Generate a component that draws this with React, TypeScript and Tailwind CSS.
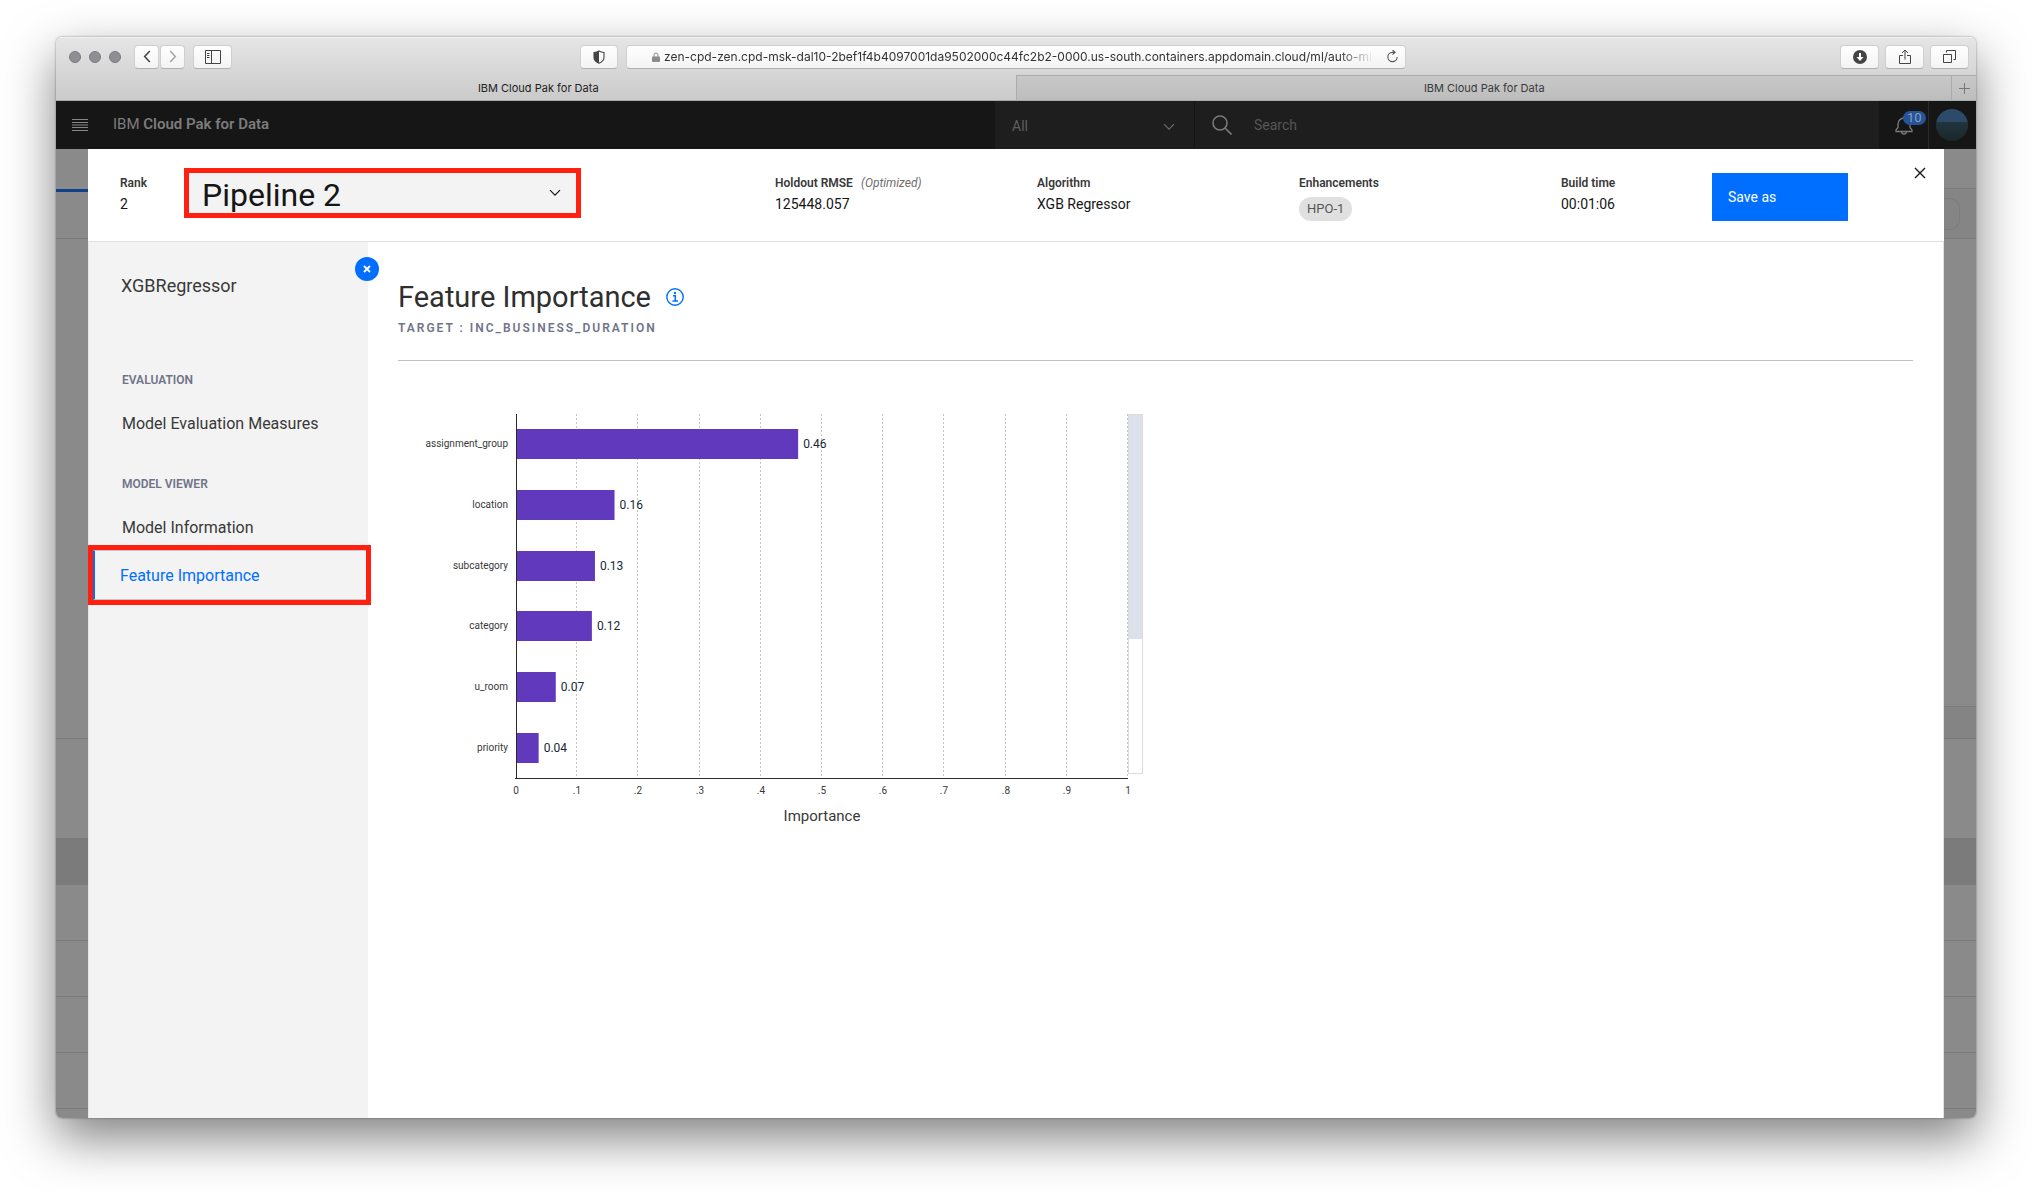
import type { ReactNode } from "react";

const features = [
  { name: "assignment_group", label: "0.46", value: 0.461 },
  { name: "location", label: "0.16", value: 0.161 },
  { name: "subcategory", label: "0.13", value: 0.129 },
  { name: "category", label: "0.12", value: 0.124 },
  { name: "u_room", label: "0.07", value: 0.065 },
  { name: "priority", label: "0.04", value: 0.037 },
];

const ticks = ["0", ".1", ".2", ".3", ".4", ".5", ".6", ".7", ".8", ".9", "1"];

function ChromeButton({ label, className = "", children }: { label: string; className?: string; children: ReactNode }) {
  return (
    <button
      type="button"
      aria-label={label}
      className={`flex h-6 items-center justify-center rounded-[4px] border border-[#cfcfcf] border-b-[#b0b0b0] bg-linear-to-b from-white to-[#f3f3f3] text-[#444] ${className}`}
    >
      {children}
    </button>
  );
}

function Chevron({ className = "" }: { className?: string }) {
  return (
    <svg viewBox="0 0 12 8" className={`h-2 w-3 ${className}`} fill="none" stroke="currentColor" strokeWidth="1.2" aria-hidden="true">
      <path d="M1 1.2 6 6.2 11 1.2" />
    </svg>
  );
}

function BrowserChrome() {
  return (
    <header className="bg-linear-to-b from-[#e6e6e6] to-[#cacaca] font-[Inter,sans-serif]">
      <div className="grid h-[38px] grid-cols-[524fr_826px_570fr] items-center border-t border-[#f2f2f2]">
        <div className="flex items-center pl-[13px]">
          <div className="flex gap-2">
            <span className="size-3 rounded-full border border-[#7b7b80] bg-[#8e8e93]" />
            <span className="size-3 rounded-full border border-[#7b7b80] bg-[#8e8e93]" />
            <span className="size-3 rounded-full border border-[#7b7b80] bg-[#8e8e93]" />
          </div>
          <div className="ml-[13px] flex gap-px">
            <ChromeButton label="Back" className="w-[25px]">
              <svg viewBox="0 0 8 14" className="h-[13px] w-2" fill="none" stroke="#3f3f3f" strokeWidth="1.6"><path d="M7 1 1.5 7 7 13" /></svg>
            </ChromeButton>
            <ChromeButton label="Forward" className="w-[25px]">
              <svg viewBox="0 0 8 14" className="h-[13px] w-2" fill="none" stroke="#a3a3a3" strokeWidth="1.6"><path d="M1 1 6.500 7 1 13" /></svg>
            </ChromeButton>
          </div>
          <ChromeButton label="Show sidebar" className="ml-2 w-[39px]">
            <svg viewBox="0 0 16 14" className="h-[14px] w-4" fill="none" stroke="#444"><path d="M.5.5h15v13H.5zM6.500.5v13M2 3.500h2.500M2 5.500h2.500M2 7.500h2.500" /></svg>
          </ChromeButton>
        </div>
        <div className="flex gap-2">
          <ChromeButton label="Privacy report" className="w-[38px] shrink-0">
            <svg viewBox="0 0 12 14" className="h-[14px] w-3" aria-hidden="true">
              <path d="M6 1C4.500 1.900 3 2.300 1 2.500v5C1 10.300 3 12 6 13.200 9 12 11 10.300 11 7.500v-5C9 2.300 7.500 1.900 6 1Z" fill="none" stroke="#444" strokeWidth="1.100" />
              <path d="M6 1C4.500 1.900 3 2.300 1 2.500v5C1 10.300 3 12 6 13.200Z" fill="#444" />
            </svg>
          </ChromeButton>
          <div className="flex h-6 flex-1 items-center rounded-[4px] border border-[#cfcfcf] border-b-[#b0b0b0] bg-linear-to-b from-white to-[#f3f3f3] pr-[6px] pl-[25px]">
            <svg viewBox="0 0 8 10" className="mr-1 h-[10px] w-2 shrink-0" aria-hidden="true">
              <path d="M2 5V3a2 2 0 0 1 4 0v2" fill="none" stroke="#8c8c8c" />
              <rect y="4.500" width="8" height="5.500" rx="1" fill="#8c8c8c" />
            </svg>
            <input
              aria-label="Address"
              defaultValue="zen-cpd-zen.cpd-msk-dal10-2bef1f4b4097001da9502000c44fc2b2-0000.us-south.containers.appdomain.cloud/ml/auto-ml"
              className="min-w-0 flex-1 bg-transparent text-[12px] leading-4 text-[#333] outline-none mask-[linear-gradient(to_right,black_95%,transparent)]"
            />
            <svg viewBox="0 0 14 14" className="ml-3 size-[13px] shrink-0" fill="none" stroke="#555" strokeWidth="1.200" aria-hidden="true">
              <path d="M12 7.500A5 5 0 1 1 7 2.500h2.500M7 0l2.800 2.500L7 5" />
            </svg>
          </div>
        </div>
        <div className="flex justify-end gap-[6px] pr-[7px]">
          <ChromeButton label="Downloads" className="w-[39px]">
            <svg viewBox="0 0 14 14" className="size-[14px]"><circle cx="7" cy="7" r="7" fill="#444" /><path d="M7 3v5" stroke="#fff" strokeWidth="2" /><path d="M3.500 7h7L7 11Z" fill="#fff" /></svg>
          </ChromeButton>
          <ChromeButton label="Share" className="w-[39px]">
            <svg viewBox="0 0 12 16" className="h-4 w-3" fill="none" stroke="#444"><path d="M4 6.500H.5v8h11v-8H8M6 10.500V1M3 4l3-3 3 3" /></svg>
          </ChromeButton>
          <ChromeButton label="Show all tabs" className="w-[39px]">
            <svg viewBox="0 0 13 13" className="size-[13px]" fill="none" stroke="#444"><path d="M.5 4.500h8v8h-8zM3.500 2.500v-2h9v9h-2" /></svg>
          </ChromeButton>
        </div>
      </div>
      <div className="flex h-[26px] text-[11px] leading-4 text-[#222]">
        <button type="button" className="flex-[959] border-b border-[#a9a9a9] pl-1">IBM Cloud Pak for Data</button>
        <button type="button" className="flex-[936] border-y border-l border-[#ababab] bg-linear-to-b from-[#c8c8c8] to-[#bdbdbd] text-[#3a3a3a]">IBM Cloud Pak for Data</button>
        <button type="button" aria-label="New tab" className="flex w-[25px] items-center justify-center border-y border-l border-[#ababab] bg-linear-to-b from-[#c8c8c8] to-[#bdbdbd]">
          <svg viewBox="0 0 11 11" className="size-[11px]" stroke="#777"><path d="M5.500 0v11M0 5.500h11" /></svg>
        </button>
      </div>
    </header>
  );
}

function ProductBar() {
  return (
    <div className="flex h-12 bg-[#161616] text-sm text-[#7c7c7c]">
      <div className="flex min-w-0 flex-1 items-center gap-[25px] pl-4">
        <button type="button" aria-label="Menu">
          <svg viewBox="0 0 16 12" className="h-3 w-4" stroke="#858585"><path d="M0 .5h16M0 3.500h16M0 6h16M0 8.500h16M0 11.500h16" /></svg>
        </button>
        <span className="text-[15px]">IBM <b className="font-semibold">Cloud Pak for Data</b></span>
      </div>
      <div className="flex w-[884px] bg-[#1e1e1e]">
        <label className="relative flex w-[200px] items-center border-r border-[#141414]">
          <select aria-label="Search scope" className="h-full w-full appearance-none bg-transparent pt-[2px] pl-[17px] text-[#5e5e5e] outline-none">
            <option>All</option>
          </select>
          <Chevron className="pointer-events-none absolute top-[22px] right-[19px] text-[#6a6a6a]" />
        </label>
        <label className="flex flex-1 items-center gap-[22px] pl-[17px]">
          <svg viewBox="0 0 20 20" className="size-5 shrink-0" fill="none" stroke="#7a7a7a" strokeWidth="1.600" aria-hidden="true"><circle cx="8" cy="8" r="7" /><path d="m13 13 6.500 6.500" /></svg>
          <input aria-label="Search" placeholder="Search" className="min-w-0 flex-1 bg-transparent outline-none placeholder:text-[#565656]" />
        </label>
      </div>
      <button type="button" aria-label="Notifications" className="relative flex w-[50px] items-center justify-center border-r border-[#2b2b2b]">
        <svg viewBox="0 0 18 20" className="h-5 w-[18px]" fill="none" stroke="#7a7a7a" strokeWidth="1.300" aria-hidden="true">
          <path d="M9 1v2M1 16.500v-1.500l2-2.500V9a6 6 0 0 1 12 0v3.500l2 2.500v1.500ZM6.500 16.500a2.500 2.500 0 0 0 5 0" />
        </svg>
        <span className="absolute top-[10px] left-6 rounded-full bg-[#25549a] px-1 text-[13px] leading-[14px] text-[#8c9cb5]">10</span>
      </button>
      <button type="button" aria-label="Profile" className="flex w-[47px] items-center justify-center pr-[2px]">
        <span className="size-8 rounded-full bg-linear-to-b from-[#2d4a6b] from-40% via-[#22353d] via-40% to-[#1a262b]" />
      </button>
    </div>
  );
}

function Backdrop() {
  return (
    <div className="col-start-1 row-start-1 flex flex-col bg-[#8a8a8a]" aria-hidden="true">
      <div className="flex h-10 border-b border-[#7a7a7a]">
        <span className="h-[43px] w-8 border-b-3 border-[#10428c] bg-[#8a8a8a]" />
      </div>
      <div className="flex h-[50px] justify-end border-b border-[#7a7a7a]">
        <div className="flex w-8 items-center bg-[#858585]">
          <span className="h-8 w-4 rounded-r-[10px] border border-l-0 border-[#7c7c7c]" />
        </div>
      </div>
      <div className="flex h-[500px] items-end justify-end border-b border-[#7a7a7a]">
        <span className="h-8 w-8 border-t border-[#7c7c7c] bg-[#848484]" />
      </div>
      <div className="h-[99px]" />
      <div className="h-[47px] bg-[#7b7b7b]" />
      <div className="h-14 border-b border-[#7a7a7a]" />
      <div className="h-14 border-b border-[#7a7a7a]" />
      <div className="h-14 border-b border-[#7a7a7a]" />
      <div className="h-14 border-b border-[#7a7a7a]" />
      <div className="h-[9px]" />
    </div>
  );
}

function Stat({ title, note, children }: { title: string; note?: string; children: ReactNode }) {
  return (
    <div className="w-[262px]">
      <div className="text-xs leading-[18px] font-semibold text-[#393939]">
        {title}
        {note && <i className="ml-2 font-normal text-[#6f6f6f]">{note}</i>}
      </div>
      <div className="mt-[3px] text-sm leading-[18px] text-[#161616]">{children}</div>
    </div>
  );
}

function PipelineHeader() {
  return (
    <div className="flex h-[93px] items-start border-b border-[#e0e0e0] pr-[18px] pl-8">
      <div className="w-16 pt-[25px]">
        <div className="text-xs leading-[18px] font-semibold text-[#393939]">Rank</div>
        <div className="mt-[3px] text-sm leading-[18px] text-[#161616]">2</div>
      </div>
      <label className="relative mt-[19px] flex h-[50px] w-[397px] items-center border-5 border-[#ff2012] bg-[#f3f3f3]">
        <select aria-label="Pipeline" className="h-full w-full appearance-none bg-transparent pt-[3px] pl-[13px] text-[32px] leading-9 text-[#161616] outline-none">
          <option>Pipeline 2</option>
        </select>
        <Chevron className="pointer-events-none absolute right-[15px] text-[#161616]" />
      </label>
      <div className="ml-auto flex pt-[25px]">
        <Stat title="Holdout RMSE" note="(Optimized)">125448.057</Stat>
        <Stat title="Algorithm">XGB Regressor</Stat>
        <Stat title="Enhancements">
          <span className="mt-[2px] inline-block rounded-full bg-[#e0e0e0] px-2 text-[13px] leading-6 text-[#565656]">HPO-1</span>
        </Stat>
        <div className="w-[151px]">
          <Stat title="Build time">00:01:06</Stat>
        </div>
      </div>
      <button type="button" className="mt-6 h-12 w-[136px] bg-[#006fff] pl-4 text-left text-sm text-white">Save as</button>
      <button type="button" aria-label="Close" className="mt-[18px] ml-[66px] flex size-3 items-center justify-center">
        <svg viewBox="0 0 12 12" className="size-3" stroke="#161616" strokeWidth="1.400"><path d="m1 1 10 10M11 1 1 11" /></svg>
      </button>
    </div>
  );
}

function SideNav() {
  return (
    <nav className="relative w-[280px] shrink-0 border-l border-[#e6e6e6] bg-[#f3f3f3] text-base leading-6 text-[#393939]">
      <button type="button" aria-label="Collapse panel" className="absolute top-[15px] -right-[11px] flex size-6 items-center justify-center rounded-full bg-[#006fff]">
        <svg viewBox="0 0 8 8" className="size-2" stroke="#fff" strokeWidth="1.800"><path d="m1 1 6 6M7 1 1 7" /></svg>
      </button>
      <h2 className="pt-8 pl-8 text-lg leading-6">XGBRegressor</h2>
      <h3 className="mt-[74px] pl-[33px] text-xs leading-4 font-semibold text-[#6f7489]">EVALUATION</h3>
      <a href="#measures" className="mt-6 block pl-[33px]">Model Evaluation Measures</a>
      <h3 className="mt-10 pl-[33px] text-xs leading-4 font-semibold text-[#6f7489]">MODEL VIEWER</h3>
      <a href="#information" className="mt-6 block pl-[33px]">Model Information</a>
      <div className="mt-[5px] -mr-[3px] -ml-px border-5 border-[#ff2012]">
        <a href="#importance" aria-current="page" className="block border-y border-l-2 border-y-[#c6c6c6] border-l-[#006fff] bg-[#f3f3f3] pt-[13px] pb-[11px] pl-[25px] text-[#006fff]">Feature Importance</a>
      </div>
    </nav>
  );
}

function ImportanceChart() {
  const left = 118;
  const top = 1;
  const span = 612;
  return (
    <svg viewBox="0 0 750 420" className="h-[420px] w-[750px]" role="img" aria-label="Feature importance bar chart">
      {ticks.slice(1).map((t, i) => (
        <line key={t} x1={left - 0.5 + Math.round((i + 1) * 61.2)} x2={left - 0.5 + Math.round((i + 1) * 61.2)} y1={top} y2={top + 364} stroke="#c4c4c4" strokeDasharray="2 2" />
      ))}
      {features.map((f, i) => (
        <g key={f.name}>
          <rect x={left} y={top + 15 + Math.round(i * 60.8)} width={f.value * span} height="30" fill="#6039bd" />
          <text x={left - 8} y={top + 33 + Math.round(i * 60.8)} textAnchor="end" className="fill-[#393939] text-[10px]">{f.name}</text>
          <text x={left + 5 + f.value * span} y={top + 34 + Math.round(i * 60.8)} className="fill-[#152935] text-xs">{f.label}</text>
        </g>
      ))}
      <path d="M118.500 1v365M117 365.500h613" stroke="#2b2b2b" />
      {ticks.map((t, i) => (
        <text key={t} x={left + Math.round(i * 61.2)} y="381" textAnchor="middle" className="fill-[#393939] text-[10px]">{t}</text>
      ))}
      <text x={left + span / 2} y="408" textAnchor="middle" className="fill-[#393939] text-[15px]">Importance</text>
      <rect x="730.500" y="1.500" width="14" height="359" fill="#fff" stroke="#dcdcdc" />
      <rect x="731" y="2" width="13" height="224" fill="#dbe2eb" />
    </svg>
  );
}

export default function App() {
  return (
    <div className="min-h-screen bg-white px-14 pt-[37px] pb-[74px] font-[Roboto,sans-serif]">
      <div className="overflow-hidden rounded-[6px] shadow-[0_0_2px_rgba(0,0,0,0.5),0_20px_50px_rgba(0,0,0,0.5)]">
        <BrowserChrome />
        <ProductBar />
        <div className="grid grid-cols-1">
          <Backdrop />
          <section className="z-10 col-start-1 row-start-1 mx-8 flex flex-col bg-white" aria-label="Pipeline details">
            <PipelineHeader />
            <div className="flex flex-1">
              <SideNav />
              <main className="min-w-0 flex-1 border-r border-[#e0e0e0] pr-[30px] pl-[30px]">
                <div className="flex items-center gap-[15px] pt-[37px]">
                  <h1 className="text-[29px] leading-9 text-[#2f2f2f]">Feature Importance</h1>
                  <button type="button" aria-label="About feature importance">
                    <svg viewBox="0 0 18 18" className="size-[18px]" fill="none" stroke="#006fff" aria-hidden="true">
                      <circle cx="9" cy="9" r="8.200" strokeWidth="1.400" />
                      <path d="M7 7.800h2.300v5M6.500 13h5.500" strokeWidth="1.600" />
                      <circle cx="9" cy="5" r="1.200" fill="#006fff" stroke="none" />
                    </svg>
                  </button>
                </div>
                <p className="mt-[5px] text-xs leading-4 font-semibold tracking-[2px] text-[#6f7489]">TARGET : INC_BUSINESS_DURATION</p>
                <hr className="mt-6 border-[#c0c0c0]" />
                <div className="mt-[52px]">
                  <ImportanceChart />
                </div>
              </main>
            </div>
          </section>
        </div>
      </div>
    </div>
  );
}
